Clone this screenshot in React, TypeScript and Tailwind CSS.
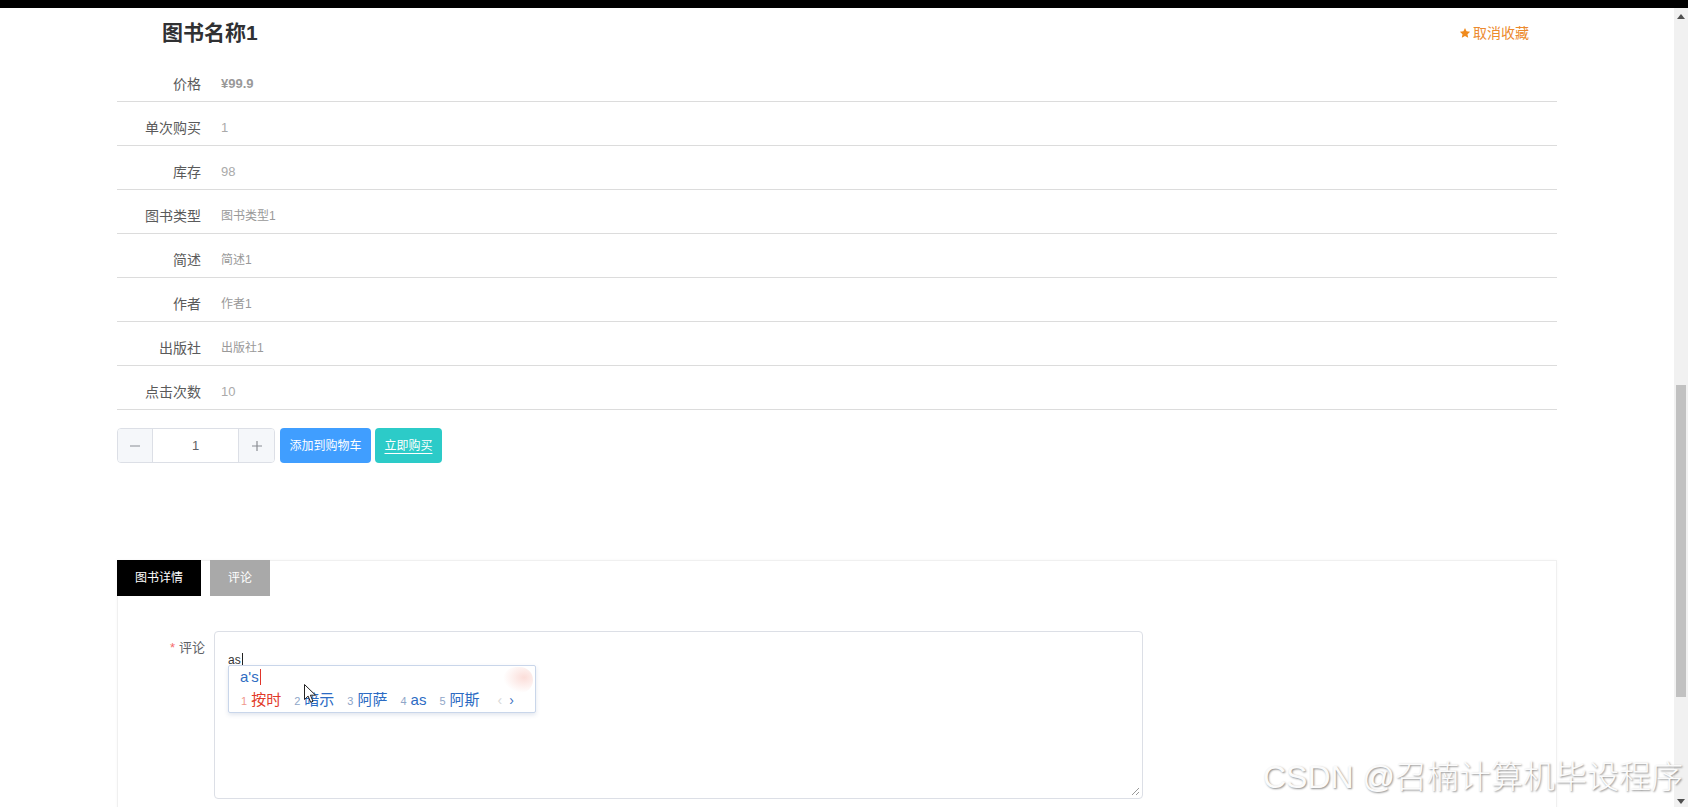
import React from 'react'

const font = "font-['Liberation_Sans','Noto_Sans_CJK_SC',sans-serif]"

const rows: { label: string; value: string; cls: string }[] = [
  { label: '价格', value: '¥99.9', cls: 'text-[13px] font-bold text-[#999]' },
  { label: '单次购买', value: '1', cls: 'text-[13px] text-[#aaa]' },
  { label: '库存', value: '98', cls: 'text-[13px] text-[#aaa]' },
  { label: '图书类型', value: '图书类型1', cls: 'text-xs text-[#999]' },
  { label: '简述', value: '简述1', cls: 'text-xs text-[#999]' },
  { label: '作者', value: '作者1', cls: 'text-xs text-[#999]' },
  { label: '出版社', value: '出版社1', cls: 'text-xs text-[#999]' },
  { label: '点击次数', value: '10', cls: 'text-[13px] text-[#aaa]' },
]

const candidates = [
  { n: '1', w: '按时', first: true },
  { n: '2', w: '暗示' },
  { n: '3', w: '阿萨' },
  { n: '4', w: 'as' },
  { n: '5', w: '阿斯' },
]

function Star() {
  return (
    <svg width="12" height="12" viewBox="0 0 24 24" className="mr-[2px]">
      <path
        d="M12 1.8l3.1 6.6 7.2.9-5.3 5 1.4 7.1L12 17.9l-6.4 3.5L7 14.3l-5.3-5 7.2-.9z"
        fill="#f08a1c"
      />
    </svg>
  )
}

function InputNumber() {
  return (
    <div className="flex h-[35px] w-[158px] overflow-hidden rounded-[4px] border border-[#dcdfe6]">
      <div className="flex w-[35px] items-center justify-center border-r border-[#dcdfe6] bg-[#f5f7fa]">
        <svg width="12" height="12" viewBox="0 0 12 12">
          <path d="M1 6h10" stroke="#8a8d93" strokeWidth="1.2" />
        </svg>
      </div>
      <div className="flex flex-1 items-center justify-center bg-white text-[13px] text-[#606266]">1</div>
      <div className="flex w-[36px] items-center justify-center border-l border-[#dcdfe6] bg-[#f5f7fa]">
        <svg width="12" height="12" viewBox="0 0 12 12">
          <path d="M1 6h10M6 1v10" stroke="#8a8d93" strokeWidth="1.2" />
        </svg>
      </div>
    </div>
  )
}

function ImePopup() {
  return (
    <div className="absolute left-[13px] top-[33px] h-[48px] w-[308px] rounded-[2px] border border-[#c9d6ea] bg-white shadow-[0_2px_4px_rgba(60,90,140,0.15)]">
      {/* skin decoration in the corner */}
      <div className="absolute right-[2px] top-[1px] h-[26px] w-[30px] rounded-full bg-[radial-gradient(ellipse_at_70%_40%,rgba(246,180,170,0.45),rgba(255,255,255,0)_70%)]" />
      <div className="flex items-center pl-[11px] pt-[2px] text-[15px] leading-[18px] text-[#2f6cc2]">
        <span>a's</span>
        <span className="ml-px inline-block h-[16px] w-px bg-[#e0352b]" />
      </div>
      <div className="mt-[4px] flex items-baseline gap-[13px] pl-[12px] leading-[20px]">
        {candidates.map((c) => (
          <div key={c.n} className="flex items-baseline gap-[4px]">
            <span className={`text-[11px] ${c.first ? 'text-[#f0998c]' : 'text-[#8fa6c8]'}`}>{c.n}</span>
            <span className={`text-[15px] ${c.first ? 'text-[#e23b2a]' : 'text-[#2c6bc3]'}`}>{c.w}</span>
          </div>
        ))}
        <div className="ml-[5px] flex items-baseline gap-[7px] text-[14px]">
          <span className="text-[#d8d8d8]">‹</span>
          <span className="text-[#3f74c2]">›</span>
        </div>
      </div>
      {/* mouse pointer */}
      <svg width="13" height="20" viewBox="0 0 13 20" className="absolute left-[75px] top-[18px]">
        <path d="M0.5 0.5v15l3.6-3.4 2.6 6.2 2.3-1-2.6-6.1h5.1z" fill="#fff" stroke="#222" strokeWidth="1" />
      </svg>
    </div>
  )
}

function Scrollbar() {
  return (
    <div className="flex w-[14px] shrink-0 flex-col bg-[#f1f1f1]">
      <div className="flex h-[17px] shrink-0 items-center justify-center">
        <svg width="8" height="5" viewBox="0 0 8 5">
          <path d="M4 0l4 5H0z" fill="#505050" />
        </svg>
      </div>
      <div className="h-[360px] shrink-0" />
      <div className="mx-auto h-[312px] w-[10px] shrink-0 bg-[#c1c1c1]" />
      <div className="flex flex-1 items-end justify-center pb-[3px]">
        <svg width="8" height="5" viewBox="0 0 8 5">
          <path d="M0 0h8L4 5z" fill="#505050" />
        </svg>
      </div>
    </div>
  )
}

export default function App() {
  return (
    <div className={`relative flex h-[807px] w-[1688px] flex-col overflow-hidden bg-white ${font}`}>
      <div className="h-2 shrink-0 bg-black" />
      <div className="flex min-h-0 flex-1 overflow-hidden">
        <main className="min-w-0 flex-1">
          <div className="mx-auto w-[1440px]">
            {/* title */}
            <div className="flex h-[50px] items-center justify-between pl-[45px] pr-[28px]">
              <h1 className="text-[21px] font-bold text-[#303133]">图书名称1</h1>
              <button className="flex items-center text-sm text-[#ec8a2e]">
                <Star />
                取消收藏
              </button>
            </div>

            {/* detail rows */}
            {rows.map((r) => (
              <div key={r.label} className="flex h-11 items-center border-b border-[#dcdcdc] pt-2">
                <div className="w-[84px] text-right text-sm text-[#5a5a5a]">{r.label}</div>
                <div className={`ml-[20px] ${r.cls}`}>{r.value}</div>
              </div>
            ))}

            {/* quantity and actions */}
            <div className="mt-[18px] flex items-center">
              <InputNumber />
              <button className="ml-[5px] h-[35px] w-[91px] rounded-[4px] bg-[#409eff] text-xs text-white">
                添加到购物车
              </button>
              <button className="ml-[4px] h-[35px] w-[67px] rounded-[4px] bg-[#2ccbc8] text-xs text-white underline underline-offset-[3px]">
                立即购买
              </button>
            </div>

            {/* tabs card */}
            <div className="mt-[97px] border border-[#f0f0f0] shadow-[0_0_4px_rgba(0,0,0,0.03)]">
              <div className="-ml-px -mt-px flex gap-[9px]">
                <div className="flex h-[36px] w-[84px] items-center justify-center bg-black text-xs text-white">图书详情</div>
                <div className="flex h-[36px] w-[60px] items-center justify-center bg-[#a9a9a9] text-xs text-white">评论</div>
              </div>
              <div className="flex pt-[35px]">
                <div className="w-[87px] pt-[9px] text-right text-[13px] leading-[16px] text-[#606266]">
                  <span className="mr-[4px] text-[#f56c6c]">*</span>评论
                </div>
                <div className="relative ml-[9px] h-[168px] w-[929px] rounded-[4px] border border-[#dcdfe6] bg-white">
                  <div className="flex items-center pl-[13px] pt-[20px] text-xs leading-[16px] text-[#333]">
                    as<span className="ml-px inline-block h-[14px] w-px bg-[#222]" />
                  </div>
                  <ImePopup />
                  <svg width="9" height="9" viewBox="0 0 9 9" className="absolute bottom-[2px] right-[2px]">
                    <path d="M8 1L1 8M8 5L5 8" stroke="#999" strokeWidth="1" />
                  </svg>
                </div>
              </div>
              <div className="h-10" />
            </div>
          </div>
        </main>
        <Scrollbar />
      </div>

      {/* watermark */}
      <div className="absolute bottom-[14px] right-[5px] text-[32px] font-light leading-none text-[#fbfbfb] [text-shadow:1px_1px_2px_rgba(0,0,0,0.45)]">
        CSDN @召楠计算机毕设程序
      </div>
    </div>
  )
}
